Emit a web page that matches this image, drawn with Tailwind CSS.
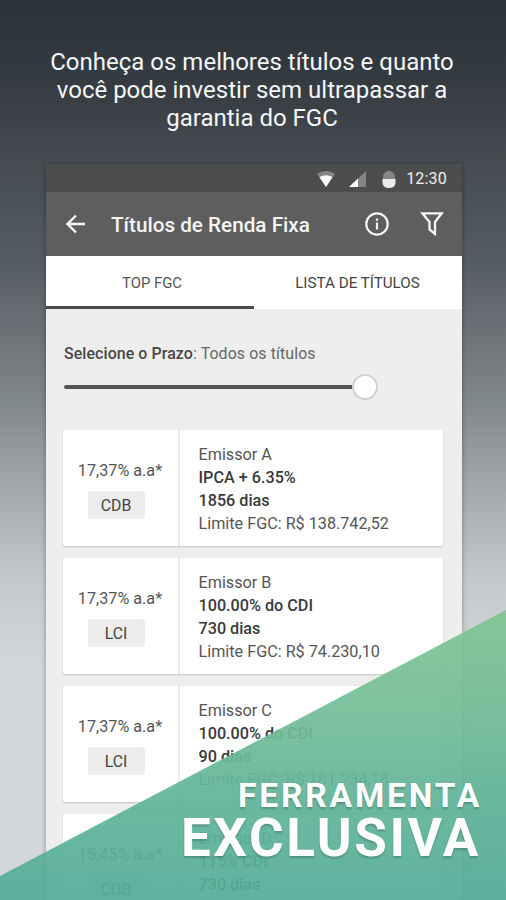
<!DOCTYPE html>
<html lang="pt-BR">
<head>
<meta charset="utf-8">
<title>Títulos de Renda Fixa</title>
<script src="https://cdn.jsdelivr.net/npm/@tailwindcss/browser@4"></script>
</head>
<body class="font-[Roboto,sans-serif]">
<main class="relative h-[900px] w-[506px] overflow-hidden bg-[linear-gradient(180deg,#2b3138_0px,#343b41_80px,#464b50_158px,#4a525a_200px,#565c64_260px,#6b7175_330px,#80878a_400px,#a0a6a8_480px,#c4c9cc_580px,#d3d7da_670px,#d3d7da_900px)]">
  <h1 class="h-[164px] pt-12 pr-[2px] text-center text-[24px] leading-[28px] text-[#f4f6f8]"><span class="whitespace-nowrap">Conheça os melhores títulos e quanto</span><br><span class="whitespace-nowrap">você pode investir sem ultrapassar a</span><br>garantia do FGC</h1>

  <section class="ml-[46px] flex h-[760px] w-[416px] flex-col bg-[#eeeeee] shadow-[0_1px_5px_rgba(0,0,0,0.35)]">
    <div class="flex h-7 shrink-0 items-center justify-end bg-[#4d4d4d] pt-[2px] pr-[15px] text-[16px] tracking-[0.2px] text-[#f0f0f0]">
      <svg class="mr-[14px] h-[16px] w-[18px]" viewBox="0 0 18 16"><path d="M0 3Q9-3 18 3L9 16Z" fill="#858585"/><path d="M2.500 6Q9 2.500 15.500 6L9 16Z" fill="#fff"/></svg>
      <svg class="mr-[16px] h-[16px] w-[17px]" viewBox="0 0 17 16"><path d="M17 0V16H0Z" fill="#858585"/><path d="M9 7.500V16H0Z" fill="#fff"/></svg>
      <svg class="mr-[10px] h-[18px] w-[14px]" viewBox="0 0 14 18"><path d="M1 9V7Q1 3 4 2Q7-1 10 2Q13 3 13 7V9Z" fill="#858585"/><path d="M.5 9H13.500V13Q13 18 7 18T.5 13Z" fill="#ededed"/></svg>
      <span>12:30</span>
    </div>
    <header class="flex h-16 shrink-0 items-center bg-[#5e5e5e] pr-[18px] pl-[20px] text-[#f5f5f5]">
      <svg class="h-5 w-5" viewBox="0 0 20 20" fill="none" stroke="currentColor" stroke-width="2.400"><path d="M19 10H2M10 1.500L1.500 10L10 18.500"/></svg>
      <h2 class="ml-[25px] flex-1 pt-[3px] text-[20.7px] font-medium whitespace-nowrap">Títulos de Renda Fixa</h2>
      <svg class="mr-[31px] h-6 w-6" viewBox="0 0 24 24" fill="none" stroke="currentColor" stroke-width="2.200"><circle cx="12" cy="12" r="10.700"/><path d="M12 10.500V17.500M12 6.500V8.700"/></svg>
      <svg class="h-6 w-6" viewBox="0 0 24 24" fill="none" stroke="currentColor" stroke-width="2.300"><path d="M2.300 1.300H21.700L15 10V22L9.500 17.500V10Z"/></svg>
    </header>
    <nav class="grid h-[53px] shrink-0 grid-cols-2 bg-white text-center text-[15.2px] leading-[54px] text-[#444]">
      <div class="h-[53px] border-b-[3px] border-[#4c4c4c] pl-1 text-[14.9px] text-[#555]">TOP FGC</div>
      <div class="pr-px">LISTA DE TÍTULOS</div>
    </nav>
    <div class="flex h-[121px] shrink-0 flex-col px-[18px] pt-[35px]">
      <p class="text-[15.9px] leading-5 tracking-[0.1px] whitespace-nowrap text-[#666]"><span class="font-medium text-[#484848]">Selecione o Prazo</span>: Todos os títulos</p>
      <div class="mt-[9px] flex h-[27px] items-center">
        <div class="h-1 w-[288px] rounded-l-full bg-[#555]"></div>
        <div class="size-[26px] rounded-full border-2 border-[#d0d0d0] bg-white"></div>
      </div>
    </div>
    <div id="cards" class="flex flex-col gap-3 pr-[19px] pl-[17px]"></div>
  </section>

  <svg class="absolute inset-0" width="506" height="900" viewBox="0 0 506 900">
    <defs><linearGradient id="green" gradientUnits="userSpaceOnUse" x1="0" y1="610" x2="0" y2="900"><stop stop-color="#80c492"/><stop offset=".35" stop-color="#74bd97"/><stop offset=".65" stop-color="#61b499"/><stop offset="1" stop-color="#54ad98"/></linearGradient></defs>
    <path d="M506 610V900H0V876Z" fill="url(#green)" fill-opacity=".93"/>
  </svg>
  <div class="absolute top-[777px] right-[27px] flex flex-col items-end font-bold text-white [text-shadow:0_2px_2px_rgba(0,0,0,0.2)]">
    <span class="-mr-[3px] text-[33.5px] leading-[38px] tracking-[2.85px]">FERRAMENTA</span>
    <span class="-mr-[2px] text-[53px] leading-[46px] tracking-[2.6px]">EXCLUSIVA</span>
  </div>
</main>
<script>
const rows = [
  ['17,37% a.a*', 'CDB', 'Emissor A', 'IPCA + 6.35%', '1856 dias', 'R$ 138.742,52'],
  ['17,37% a.a*', 'LCI', 'Emissor B', '100.00% do CDI', '730 dias', 'R$ 74.230,10'],
  ['17,37% a.a*', 'LCI', 'Emissor C', '100.00% do CDI', '90 dias', 'R$ 181.234,18'],
  ['15,45% a.a*', 'CDB', 'Emissor D', '115% CDI', '730 dias', '']
];
document.getElementById('cards').innerHTML = rows.map(([rate, kind, name, index, days, limit]) => `
  <article class="flex h-[116px] shrink-0 rounded-[3px] bg-white text-[16.2px] leading-[23px] text-[#555] shadow-[0_1px_2px_rgba(0,0,0,0.18)]">
    <div class="flex w-[117px] shrink-0 flex-col items-center border-r-2 border-[#ececec] pt-[29px] pr-px">
      <span class="whitespace-nowrap">${rate}</span>
      <span class="mt-[9px] -ml-2 h-[28px] w-[57px] rounded-[3px] bg-[#ececec] text-center text-[15.8px] leading-[29px] text-[#444]">${kind}</span>
    </div>
    <div class="pt-[13px] pl-[18.500px] whitespace-nowrap">
      <p>${name}</p>
      <p class="font-medium text-[#3a3a3a]">${index}</p>
      <p class="font-medium text-[#3a3a3a]">${days}</p>
      <p>${limit ? 'Limite FGC: ' + limit : ''}</p>
    </div>
  </article>`).join('');
</script>
</body>
</html>
